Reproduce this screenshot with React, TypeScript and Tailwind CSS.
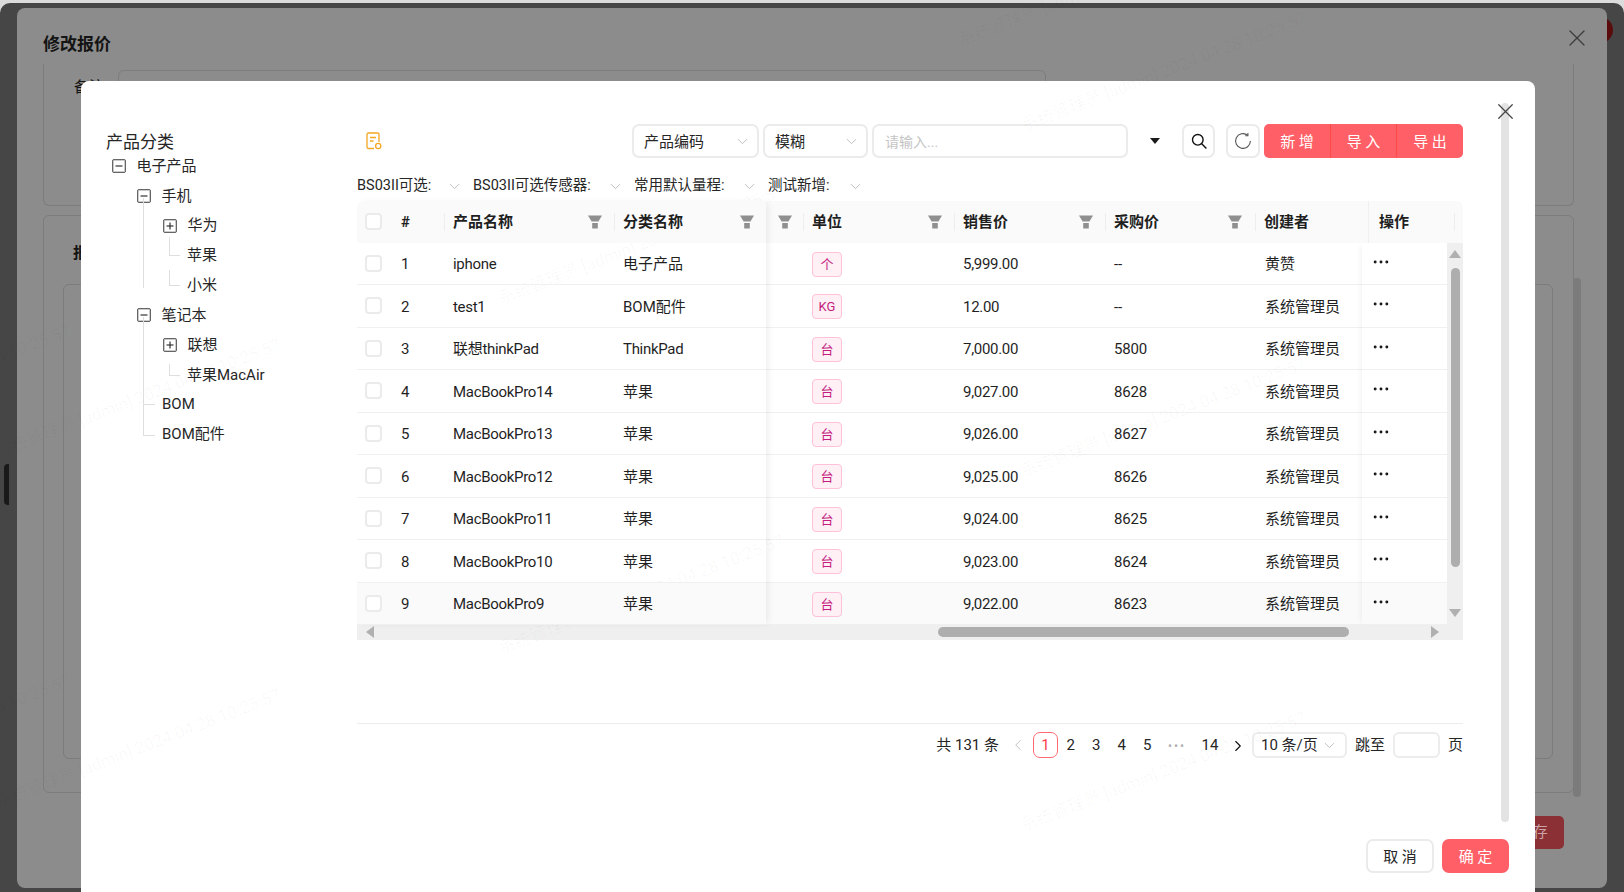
import React from "react";
import { ChevronDown, ChevronLeft, ChevronRight, Ellipsis, X } from "lucide-react";

const font = "font-['Roboto','Noto_Sans_CJK_SC',sans-serif]";

const rows = [
  { id: 1, name: "iphone", cat: "电子产品", unit: "个", sale: "5,999.00", buy: "--", user: "黄赞" },
  { id: 2, name: "test1", cat: "BOM配件", unit: "KG", sale: "12.00", buy: "--", user: "系统管理员" },
  { id: 3, name: "联想thinkPad", cat: "ThinkPad", unit: "台", sale: "7,000.00", buy: "5800", user: "系统管理员" },
  { id: 4, name: "MacBookPro14", cat: "苹果", unit: "台", sale: "9,027.00", buy: "8628", user: "系统管理员" },
  { id: 5, name: "MacBookPro13", cat: "苹果", unit: "台", sale: "9,026.00", buy: "8627", user: "系统管理员" },
  { id: 6, name: "MacBookPro12", cat: "苹果", unit: "台", sale: "9,025.00", buy: "8626", user: "系统管理员" },
  { id: 7, name: "MacBookPro11", cat: "苹果", unit: "台", sale: "9,024.00", buy: "8625", user: "系统管理员" },
  { id: 8, name: "MacBookPro10", cat: "苹果", unit: "台", sale: "9,023.00", buy: "8624", user: "系统管理员" },
  { id: 9, name: "MacBookPro9", cat: "苹果", unit: "台", sale: "9,022.00", buy: "8623", user: "系统管理员" },
];

// start of each watermark line (bottom-left of the rotated text)
const watermarks = [
  { x: -210, y: 450 },
  { x: -210, y: 800 },
  { x: 0, y: 464 },
  { x: 0, y: 814 },
  { x: 503, y: 310 },
  { x: 503, y: 660 },
  { x: 963, y: 52 },
  { x: 1026, y: 137 },
  { x: 1025, y: 483 },
  { x: 1025, y: 837 },
];

const Chevron = ({ className = "" }: { className?: string }) => (
  <ChevronDown size={17} strokeWidth={1.25} className={"shrink-0 text-[#b8b8b8] " + className} />
);

const Funnel = () => (
  <svg width="14" height="14" viewBox="0 0 14 14" className="shrink-0">
    <path d="M0 0.5h14l-3.6 6H3.6z" fill="#8f8f8f" />
    <path d="M4.2 8h5.6v5.5H4.2z" fill="#8f8f8f" />
  </svg>
);

const Check = () => <span className="block w-[17px] h-[17px] rounded-[4px] border-2 border-[#ebebeb] bg-white" />;

const Divider = () => <span className="w-px h-[18px] bg-[#eeeeee] shrink-0" />;

const TreeBox = ({ open }: { open?: boolean }) => (
  <svg width="14" height="14" viewBox="0 0 14 14" className="shrink-0">
    <rect x="0.75" y="0.75" width="12.5" height="12.5" rx="0.5" fill="none" stroke="#333" strokeWidth="1" />
    <path d="M3.5 7h7" stroke="#333" strokeWidth="1.2" />
    {!open && <path d="M7 3.5v7" stroke="#333" strokeWidth="1.2" />}
  </svg>
);

const TreeRow = ({ left, label, box, children }: { left: string; label: string; box?: "open" | "closed"; children?: React.ReactNode }) => (
  <div className={"relative h-[29.85px] flex items-center " + left}>
    {children}
    {box ? (
      <span className="w-[24.5px] shrink-0">
        <TreeBox open={box === "open"} />
      </span>
    ) : null}
    <span>{label}</span>
  </div>
);

const line = "absolute bg-[#dedede]";

const Tree = () => (
  <div className="w-[251px] shrink-0 pt-[7px] text-[15px] text-[#262626]">
    <div className="h-[20px] pt-[1px] leading-[20px] text-[17px]">产品分类</div>
    <TreeRow left="pl-[6px]" label="电子产品" box="open" />
    <TreeRow left="pl-[31px]" label="手机" box="open" />
    <TreeRow left="pl-[57px]" label="华为" box="closed">
      <span className={line + " left-[37px] top-[-13px] w-px h-[90px]"} />
    </TreeRow>
    <TreeRow left="pl-[81px]" label="苹果">
      <span className={line + " left-[37px] top-0 w-px h-[30px]"} />
      <span className={line + " left-[63px] top-[-4px] w-px h-[19px]"} />
      <span className={line + " left-[63px] top-[14px] w-[11px] h-px"} />
    </TreeRow>
    <TreeRow left="pl-[81px]" label="小米">
      <span className={line + " left-[37px] top-0 w-px h-[17px]"} />
      <span className={line + " left-[63px] top-0 w-px h-[15px]"} />
      <span className={line + " left-[63px] top-[15px] w-[11px] h-px"} />
    </TreeRow>
    <TreeRow left="pl-[31px]" label="笔记本" box="open" />
    <TreeRow left="pl-[57px]" label="联想" box="closed">
      <span className={line + " left-[37px] top-[-13px] w-px h-[43px]"} />
    </TreeRow>
    <TreeRow left="pl-[81px]" label="苹果MacAir">
      <span className={line + " left-[37px] top-0 w-px h-[30px]"} />
      <span className={line + " left-[63px] top-[4px] w-px h-[11px]"} />
      <span className={line + " left-[63px] top-[15px] w-[11px] h-px"} />
    </TreeRow>
    <TreeRow left="pl-[56px]" label="BOM">
      <span className={line + " left-[37px] top-0 w-px h-[30px]"} />
      <span className={line + " left-[37px] top-[14px] w-[12px] h-px"} />
    </TreeRow>
    <TreeRow left="pl-[56px]" label="BOM配件">
      <span className={line + " left-[37px] top-0 w-px h-[15px]"} />
      <span className={line + " left-[37px] top-[15px] w-[12px] h-px"} />
    </TreeRow>
  </div>
);

const Select = ({ w, label }: { w: string; label: string }) => (
  <div className={"h-[34px] rounded-[7px] border-2 border-[#ebebeb] flex items-center justify-between pl-[10px] pr-[6px] text-[15px] text-[#262626] " + w}>
    <span className="pt-[2px]">{label}</span>
    <Chevron />
  </div>
);

const Toolbar = () => (
  <div className="flex items-center h-[34px]">
    <svg width="16" height="18" viewBox="0 0 16 18" fill="none" stroke="#f5a623" strokeWidth="1.3" className="ml-[9px] shrink-0">
      <path d="M8 16.5H2.5a1.5 1.5 0 0 1-1.5-1.5V2.5A1.5 1.5 0 0 1 2.5 1h9A1.5 1.5 0 0 1 13 2.5V10" />
      <path d="M4 5.5h6M4 9h3.5" />
      <circle cx="12.2" cy="14" r="2.6" />
    </svg>
    <div className="ml-[250px] flex gap-[4px]">
      <Select w="w-[127px]" label="产品编码" />
      <Select w="w-[105px]" label="模糊" />
      <div className="w-[256px] h-[34px] rounded-[7px] border-2 border-[#ebebeb] flex items-center pl-[11px] pt-[2px] text-[14px] text-[#c4c4c4]">请输入...</div>
    </div>
    <div className="w-[54px] flex justify-center">
      <span className="w-0 h-0 border-x-[5px] border-x-transparent border-t-[6px] border-t-[#1a1a1a]" />
    </div>
    <button className="w-[33px] h-[34px] rounded-[7px] border-2 border-[#ebebeb] flex items-center justify-center">
      <svg width="16" height="16" viewBox="0 0 16 16" fill="none" stroke="#111" strokeWidth="1.4">
        <circle cx="6.8" cy="6.8" r="5.3" />
        <path d="M10.7 10.7 15.4 15.4" />
      </svg>
    </button>
    <button className="ml-[11px] w-[34px] h-[34px] rounded-[7px] border-2 border-[#ebebeb] flex items-center justify-center">
      <svg width="18" height="18" viewBox="0 0 18 18" fill="none" stroke="#555" strokeWidth="1.1">
        <path d="M13.6 3.2A7.4 7.4 0 1 0 16.4 9" />
        <path d="M13.9 0.9v2.8h-2.6" />
      </svg>
    </button>
    <div className="ml-[4px] w-[199px] h-[34px] rounded-[5px] bg-[#ff5f66] flex text-white text-[15px]">
      <span className="w-[67px] pt-[2px] flex items-center justify-center border-r border-[#ff4a45]">新 增</span>
      <span className="w-[66px] pt-[2px] flex items-center justify-center border-r border-[#ff4a45]">导 入</span>
      <span className="flex-1 pt-[2px] flex items-center justify-center">导 出</span>
    </div>
  </div>
);

const Filters = () => (
  <div className="mt-[18px] mb-[5px] h-[20px] flex items-center text-[14.5px] text-[#262626] whitespace-nowrap">
    <span className="w-[89px]">BS03II可选:</span>
    <Chevron className="mr-[10px]" />
    <span className="w-[134px]">BS03II可选传感器:</span>
    <Chevron className="mr-[10px]" />
    <span className="w-[107px]">常用默认量程:</span>
    <Chevron className="mr-[10px]" />
    <span className="w-[79px]">测试新增:</span>
    <Chevron />
  </div>
);

const HeadCell = ({ w, label, pl = "pl-[8px]", pr = "pr-[12px]" }: { w: string; label: string; pl?: string; pr?: string }) => (
  <div className={"flex items-center h-full font-bold " + w}>
    <Divider />
    <span className={"flex-1 " + pl}>{label}</span>
    <span className={pr}>
      <Funnel />
    </span>
  </div>
);

const Tag = ({ text }: { text: string }) => (
  <span className="inline-flex items-center justify-center min-w-[30px] h-[25px] px-[5px] rounded-[4px] border border-[#ffc0d9] bg-[#fff0f6] text-[#c41d7f] text-[13px]">{text}</span>
);

const rowClass = "h-[42.5px] flex items-center border-b border-[#f0f0f0]";

const Table = () => (
  <div className="w-[1106px] text-[15px] text-[#1f1f1f]">
    <div className="flex h-[423.5px]">
      {/* left fixed */}
      <div className="relative z-10 w-[409px] shadow-[4px_0_7px_-2px_rgba(0,0,0,0.07)]">
        <div className="h-[41.5px] bg-[#fafafa] flex items-center rounded-tl-[6px]">
          <div className="w-[33px] pl-[8px]"><Check /></div>
          <div className="w-[54px] pl-[11px] font-bold">#</div>
          <HeadCell w="w-[170px]" label="产品名称" />
          <HeadCell w="w-[152px]" label="分类名称" />
        </div>
        {rows.map((r) => (
          <div key={r.id} className={rowClass + (r.id === 9 ? " bg-[#fafafa]" : "")}>
            <div className="w-[33px] pl-[8px]"><Check /></div>
            <div className="w-[54px] pl-[11px] pt-[2px]">{r.id}</div>
            <div className="w-[170px] pl-[9px] pt-[2px] tracking-[-0.3px]">{r.name}</div>
            <div className={"w-[152px] pl-[9px] pt-[2px]" + (r.cat === "ThinkPad" ? " tracking-[-0.3px]" : "")}>{r.cat}</div>
          </div>
        ))}
      </div>
      {/* middle */}
      <div className="w-[596px]">
        <div className="h-[41.5px] bg-[#fafafa] flex items-center">
          <div className="w-[37px] flex items-center justify-center"><Funnel /></div>
          <HeadCell w="w-[151px]" label="单位" pr="pr-[12px]" />
          <HeadCell w="w-[151px]" label="销售价" pr="pr-[12px]" />
          <HeadCell w="w-[150px]" label="采购价" pr="pr-[13px]" />
          <div className="flex-1 h-full flex items-center font-bold">
            <Divider />
            <span className="pl-[8px]">创建者</span>
          </div>
        </div>
        {rows.map((r) => (
          <div key={r.id} className={rowClass + (r.id === 9 ? " bg-[#fafafa]" : "")}>
            <div className="w-[37px]" />
            <div className="w-[151px] pl-[9px] pt-[2px]"><Tag text={r.unit} /></div>
            <div className="w-[151px] pl-[9px] pt-[2px] tracking-[-0.3px]">{r.sale}</div>
            <div className="w-[150px] pl-[9px] pt-[2px] tracking-[-0.2px]">{r.buy}</div>
            <div className="flex-1 pl-[10px] pt-[2px]">{r.user}</div>
          </div>
        ))}
      </div>
      {/* right fixed */}
      <div className="w-[101px] relative z-10">
        <div className="h-[41.5px] bg-[#fafafa] flex items-center pl-[6px] rounded-tr-[6px]">
          <div className="flex-1 h-full flex items-center justify-between border-l border-[#f0f0f0] pl-[10px] pr-[8px] font-bold">
            <span>操作</span>
            <Divider />
          </div>
        </div>
        <div className="flex">
          <div className="w-[85px] shadow-[-4px_0_6px_-3px_rgba(0,0,0,0.06)]">
            {rows.map((r) => (
              <div key={r.id} className={rowClass + " pl-[9px]" + (r.id === 9 ? " bg-[#fafafa]" : "")}>
                <Ellipsis size={20} strokeWidth={1.5} className="text-[#111] mb-[3px]" />
              </div>
            ))}
          </div>
          <div className="w-[16px] h-[382px] bg-[#efefef] flex flex-col items-center pt-[7px]">
            <span className="w-0 h-0 border-x-[6px] border-x-transparent border-b-[8px] border-b-[#b0b0b0]" />
            <span className="mt-[10px] w-[9px] h-[299px] rounded-full bg-[#aeaeae]" />
            <span className="mt-[42px] w-0 h-0 border-x-[6px] border-x-transparent border-t-[8px] border-t-[#b0b0b0]" />
          </div>
        </div>
      </div>
    </div>
    <div className="h-[15.5px] bg-[#efefef] flex items-center">
      <span className="ml-[9px] w-0 h-0 border-y-[6px] border-y-transparent border-r-[8px] border-r-[#b0b0b0]" />
      <span className="ml-[564px] w-[411px] h-[10px] rounded-full bg-[#aeaeae]" />
      <span className="ml-[82px] w-0 h-0 border-y-[6px] border-y-transparent border-l-[8px] border-l-[#b0b0b0]" />
    </div>
  </div>
);

const Page = ({ w = "w-[25.5px]", children }: { w?: string; children: React.ReactNode }) => (
  <span className={"flex justify-center pt-[1px] " + w}>{children}</span>
);

const Pagination = () => (
  <div className="mt-[83px] border-t border-[#ececec] pt-[8px] flex items-center justify-end h-[35px] text-[15px] text-[#262626]">
    <span className="mr-[1px] pt-[1px]">共 131 条</span>
    <span className="w-[33px] pl-[3px] flex justify-center text-[#bdbdbd]"><ChevronLeft size={18} strokeWidth={1.25} /></span>
    <span className="w-[25px] h-[26px] rounded-[7px] border border-[#ff6b73] text-[#ff3b47] flex items-center justify-center">1</span>
    <Page>2</Page>
    <Page>3</Page>
    <Page>4</Page>
    <Page>5</Page>
    <Page w="w-[34px]"><span className="text-[#b0b0b0] tracking-[2px] text-[12px]">•••</span></Page>
    <Page w="w-[32px]">14</Page>
    <Page w="w-[24px]"><ChevronRight size={18} strokeWidth={1.5} className="text-[#111]" /></Page>
    <div className="ml-[2px] w-[95px] h-[26px] rounded-[6px] border-2 border-[#ececec] flex items-center justify-between pl-[7px] pr-[7px]">
      <span>10 条/页</span>
      <Chevron />
    </div>
    <span className="ml-[8px] pt-[1px]">跳至</span>
    <span className="ml-[8px] w-[47px] h-[26px] rounded-[6px] border-2 border-[#ececec]" />
    <span className="ml-[8px] pt-[1px]">页</span>
  </div>
);

const Backdrop = () => (
  <div className="absolute left-[17px] top-[8px] w-[1590px] h-[880px] rounded-[8px] bg-[#8c8c8c] pl-[26px] pr-[33px] text-[#141414]">
    <div className="h-[56px] pt-[24px] leading-[24px] text-[17px] font-bold">修改报价</div>
    <div className="h-[142px] border border-t-0 border-[#7c7c7c] rounded-b-[6px] pl-[30px] flex gap-[14px]">
      <span className="pt-[12px] text-[15px] w-[30px]">备注</span>
      <span className="mt-[6px] w-[928px] h-[80px] rounded-[6px] border border-[#7c7c7c]" />
    </div>
    <div className="mt-[9px] h-[578px] border border-[#7c7c7c] rounded-[6px] pl-[19px] pr-[20px]">
      <div className="h-[68px] pt-[26px] pl-[10px] text-[15px] font-bold">报价信息</div>
      <div className="h-[475px] border border-[#7c7c7c] rounded-[6px] pl-[15px] pt-[10px]">
        <ChevronDown size={14} className="text-[#222]" />
      </div>
    </div>
    <div className="mt-[23px] flex justify-end pr-[10px]">
      <span className="w-[74px] h-[33px] pl-[8px] rounded-[5px] bg-[#8b3035] text-[#c9a3a5] text-[15px] flex items-center justify-center">保 存</span>
    </div>
    <X size={28} strokeWidth={1.1} className="absolute left-[1546px] top-[16px] text-[#3c3c3c]" />
    <span className="absolute left-[1556px] top-[270px] w-[8px] h-[519px] rounded-full bg-[#7b7b7b]" />
  </div>
);

export default function App() {
  return (
    <div className={"relative w-[1624px] h-[892px] overflow-hidden bg-[#dcdcdc] " + font}>
      <div className="absolute inset-x-0 top-[3px] bottom-0 rounded-t-[10px] bg-[#464646]" />
      <span className="absolute left-[1600px] top-[17px] w-[13px] h-[26px] rounded-r-full bg-[#5a0c0c]" />
      <span className="absolute left-[4px] top-[464px] w-[5px] h-[41px] rounded-l-[4px] bg-[#191919]" />
      <Backdrop />

      <div className="absolute left-[81px] top-[81px] w-[1454px] h-[830px] rounded-[8px] bg-white pl-[25px] pt-[43px]">
        <div className="flex">
          <Tree />
          <div className="w-[1106px]">
            <Toolbar />
            <Filters />
            <Table />
            <Pagination />
          </div>
        </div>
        <div className="mt-[81px] pr-[26px] flex justify-end gap-[8px] text-[15px]">
          <button className="w-[68px] h-[34px] pt-[2px] rounded-[7px] border-2 border-[#ebebeb] text-[#262626]">取 消</button>
          <button className="w-[67px] h-[34px] pt-[2px] rounded-[7px] bg-[#ff5f66] text-white">确 定</button>
        </div>
        <span className="absolute left-[1420px] top-[22px] w-[8px] h-[719px] rounded-full bg-[#e3e3e3]" />
        <X size={27} strokeWidth={1.1} className="absolute left-[1410.5px] top-[16.5px] text-[#444]" />
      </div>

      {watermarks.map((m, i) => (
        <span
          key={i}
          className="absolute h-[24px] origin-bottom-left -rotate-[21deg] whitespace-nowrap text-[17px] leading-[24px] text-black/[0.03] pointer-events-none"
          style={{ left: m.x, top: m.y - 24 }}
        >
          系统管理员 [admin] 2024 04 28 10:25:57
        </span>
      ))}
    </div>
  );
}
